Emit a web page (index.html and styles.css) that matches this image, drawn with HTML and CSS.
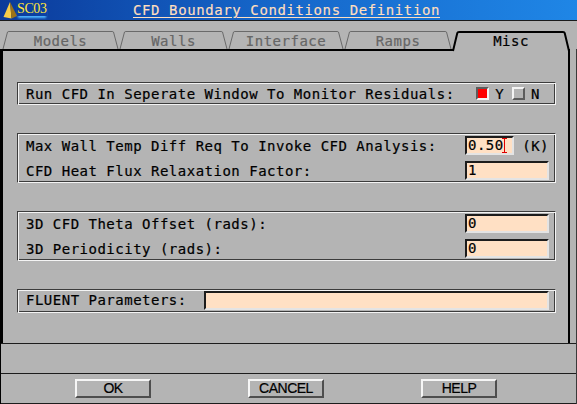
FILE: index.html
```html
<!DOCTYPE html>
<html>
<head>
<meta charset="utf-8">
<link rel="stylesheet" href="styles.css">
</head>
<body>
<div class="titlebar">
  <div class="logo">
    <svg class="pyramid" width="15" height="18" viewBox="0 0 15 18">
      <polygon points="7,1 0.5,16 8.5,17.5" fill="#f6cc4a"/>
      <polygon points="7,1 8.5,17.5 14,15" fill="#9c7318"/>
    </svg>
    <span class="logo-text">SC03</span>
  </div>
  <div class="title">CFD Boundary Conditions Definition</div>
  <div></div>
</div>

<div class="tabs">
  <div class="tab w117">
    <svg class="tab-shape" width="117" height="21" viewBox="0 0 117 21"><path d="M1,19 L5.5,2 Q6,1.5 7,1.5 H110 Q111,1.5 111.5,2 L116,19" class="tab-line"/></svg>
    <span class="tab-label">Models</span>
  </div>
  <div class="tab w109">
    <svg class="tab-shape" width="109" height="21" viewBox="0 0 109 21"><path d="M1,19 L5.5,2 Q6,1.5 7,1.5 H102 Q103,1.5 103.5,2 L108,19" class="tab-line"/></svg>
    <span class="tab-label">Walls</span>
  </div>
  <div class="tab w116">
    <svg class="tab-shape" width="116" height="21" viewBox="0 0 116 21"><path d="M1,19 L5.5,2 Q6,1.5 7,1.5 H109 Q110,1.5 110.5,2 L115,19" class="tab-line"/></svg>
    <span class="tab-label">Interface</span>
  </div>
  <div class="tab w108">
    <svg class="tab-shape" width="108" height="21" viewBox="0 0 108 21"><path d="M1,19 L5.5,2 Q6,1.5 7,1.5 H101 Q102,1.5 102.5,2 L107,19" class="tab-line"/></svg>
    <span class="tab-label">Ramps</span>
  </div>
  <div class="tab w118 active">
    <svg class="tab-shape" width="118" height="21" viewBox="0 0 118 21">
      <path d="M1,21 L5.5,2 H112.5 L117,21 Z" class="tab-fill"/>
      <path d="M1,21 L5.3,3 Q5.6,2 7,2 H111 Q112.4,2 112.7,3 L117,21" class="tab-line-active"/>
    </svg>
    <span class="tab-label">Misc</span>
  </div>
</div>

<div class="main">
  <div class="panel">
    <div class="group single">
      <span class="label">Run CFD In Seperate Window To Monitor Residuals:</span>
      <div class="choices">
        <span class="cb on"></span><span class="choice-text">Y</span>
        <span class="cb off"></span><span class="choice-text">N</span>
      </div>
    </div>

    <div class="group double">
      <div class="row">
        <span class="label">Max Wall Temp Diff Req To Invoke CFD Analysis:</span>
        <div class="field-unit">
          <div class="input short">0.50<svg class="cursor" width="5" height="15" viewBox="0 0 5 15"><path d="M0,0.5 H5 M2.5,0.5 V14.5 M0,14.5 H5" stroke="#e00000" stroke-width="1" fill="none"/></svg></div>
          <span class="unit">(K)</span>
        </div>
      </div>
      <div class="row">
        <span class="label">CFD Heat Flux Relaxation Factor:</span>
        <div class="input">1</div>
      </div>
    </div>

    <div class="group double">
      <div class="row">
        <span class="label">3D CFD Theta Offset (rads):</span>
        <div class="input">0</div>
      </div>
      <div class="row">
        <span class="label">3D Periodicity (rads):</span>
        <div class="input">0</div>
      </div>
    </div>

    <div class="group fluent">
      <span class="label">FLUENT Parameters:</span>
      <div class="input wide"></div>
    </div>
  </div>
  <div class="status"></div>
  <div class="buttons">
    <div class="btn">OK</div>
    <div class="btn">CANCEL</div>
    <div class="btn">HELP</div>
  </div>
</div>
</body>
</html>
```

FILE: styles.css
```css
html, body {
  margin: 0;
  padding: 0;
}
body {
  width: 577px;
  height: 404px;
  overflow: hidden;
  background: #b4b4b4;
  font-family: "DejaVu Sans Mono", monospace;
  font-size: 14px;
  color: #000;
}

/* title bar */
.titlebar {
  height: 20px;
  border-bottom: 1px solid #1a1a1a;
  background: linear-gradient(90deg, #0b3a9a 0%, #1565c8 45%, #1f86e6 100%);
  display: grid;
  grid-template-columns: 1fr auto 1fr;
  align-items: center;
}
.logo {
  display: flex;
  align-items: flex-start;
  height: 20px;
  padding-left: 3px;
}
.pyramid {
  margin-top: 1px;
  display: block;
}
.logo-text {
  font-family: "Liberation Serif", serif;
  font-size: 14px;
  color: #ffe63a;
  letter-spacing: -0.4px;
  line-height: 13px;
  margin-top: 2px;
  margin-left: -1px;
  padding-bottom: 1px;
  box-shadow: 0 3px 2px -1px #4fb4ff;
}
.title {
  font-size: 14px;
  letter-spacing: 0.6px;
  color: #ffdfbe;
  text-decoration: underline;
  text-underline-offset: 2px;
  white-space: pre;
  line-height: 20px;
  padding-right: 4px;
  -webkit-text-stroke: 0.15px #ffdfbe;
}

/* tabs */
.tabs {
  display: flex;
  height: 19px;
  margin-top: 9px;
  padding-left: 2px;
}
.tab {
  position: relative;
  height: 19px;
  display: flex;
  justify-content: center;
  align-items: center;
  padding-top: 3px;
  box-sizing: border-box;
}
.w117 { width: 117px; }
.w109 { width: 109px; }
.w116 { width: 116px; }
.w108 { width: 108px; }
.w118 { width: 118px; }
.tab-shape {
  position: absolute;
  left: 0;
  top: 0;
  overflow: visible;
}
.tab-line {
  fill: none;
  stroke: #6a6a6a;
  stroke-width: 1;
}
.tab-fill {
  fill: #b4b4b4;
}
.tab-line-active {
  fill: none;
  stroke: #000;
  stroke-width: 2;
}
.tab-label {
  position: relative;
  color: #666;
  letter-spacing: 0.5px;
  -webkit-text-stroke: 0.2px #666;
}
.tab.active {
  z-index: 2;
}
.tab.active .tab-label {
  color: #000;
  -webkit-text-stroke: 0.2px #000;
}

/* main area */
.main {
  border-left: 1px solid #000;
  border-right: 1px solid #3a3a3a;
}
.panel {
  border-top: 2px solid #000;
  border-left: 2px solid #000;
  border-right: 2px solid #000;
  margin-right: 6px;
  padding: 31px 0 30px 0;
  display: flex;
  flex-direction: column;
  gap: 28px;
}
.group {
  margin: 0 12px 0 14px;
  border: 1px solid;
  border-color: #3c3c3c #f4f4f4 #f4f4f4 #3c3c3c;
  box-shadow: inset 1px 1px 0 #f4f4f4, inset -1px -1px 0 #3c3c3c;
  padding: 1px;
}
.label, .choice-text, .unit, .input {
  white-space: pre;
  letter-spacing: 0.5px;
  -webkit-text-stroke: 0.2px #000;
}
.single {
  height: 23px;
  box-sizing: border-box;
  display: flex;
  align-items: center;
  justify-content: space-between;
  padding: 1px 15px 1px 8px;
}
.choices {
  display: flex;
  align-items: center;
}
.cb {
  display: block;
  width: 13px;
  height: 13px;
  box-sizing: border-box;
  border: 2px solid;
}
.cb.on {
  border-color: #5c5c5c #f4f4f4 #f4f4f4 #5c5c5c;
  background: #ff0000;
}
.cb.off {
  border-color: #f4f4f4 #5c5c5c #5c5c5c #f4f4f4;
  background: #b4b4b4;
  margin-left: 8px;
}
.choice-text {
  margin-left: 6px;
}
.double {
  height: 50px;
  box-sizing: border-box;
  display: flex;
  flex-direction: column;
  gap: 6px;
  padding: 2px 6px 2px 8px;
}
.row {
  height: 19px;
  display: flex;
  align-items: center;
  justify-content: space-between;
}
.input {
  width: 84px;
  height: 19px;
  box-sizing: border-box;
  border: 2px solid;
  border-color: #1c1c1c #e4e4e4 #e4e4e4 #1c1c1c;
  background: #ffe0c4;
  padding-left: 1px;
  display: flex;
  align-items: center;
  line-height: 15px;
}
.input.short {
  width: 49px;
}
.cursor {
  display: block;
  margin-left: -2px;
}
.field-unit {
  width: 84px;
  display: flex;
  align-items: center;
  justify-content: space-between;
}
.fluent {
  height: 24px;
  box-sizing: border-box;
  display: flex;
  align-items: flex-start;
  justify-content: space-between;
  padding: 1px 6px 1px 8px;
}
.fluent .label {
  margin-top: 1px;
}
.input.wide {
  width: 345px;
}

.status {
  height: 29px;
  border-top: 1px solid #1c1c1c;
}
.buttons {
  height: 29px;
  border-top: 1px solid #1c1c1c;
  border-bottom: 1px solid #1c1c1c;
  display: flex;
  align-items: center;
  padding-left: 74px;
  gap: 97px;
}
.btn {
  width: 76px;
  height: 19px;
  box-sizing: border-box;
  border: 2px solid;
  border-color: #f6f6f6 #4e4e4e #4e4e4e #f6f6f6;
  display: flex;
  align-items: center;
  justify-content: center;
  font-family: "Liberation Sans", Arial, sans-serif;
  font-size: 14px;
  letter-spacing: -0.5px;
  -webkit-text-stroke: 0.2px #000;
  color: #000;
  line-height: 15px;
}
```
